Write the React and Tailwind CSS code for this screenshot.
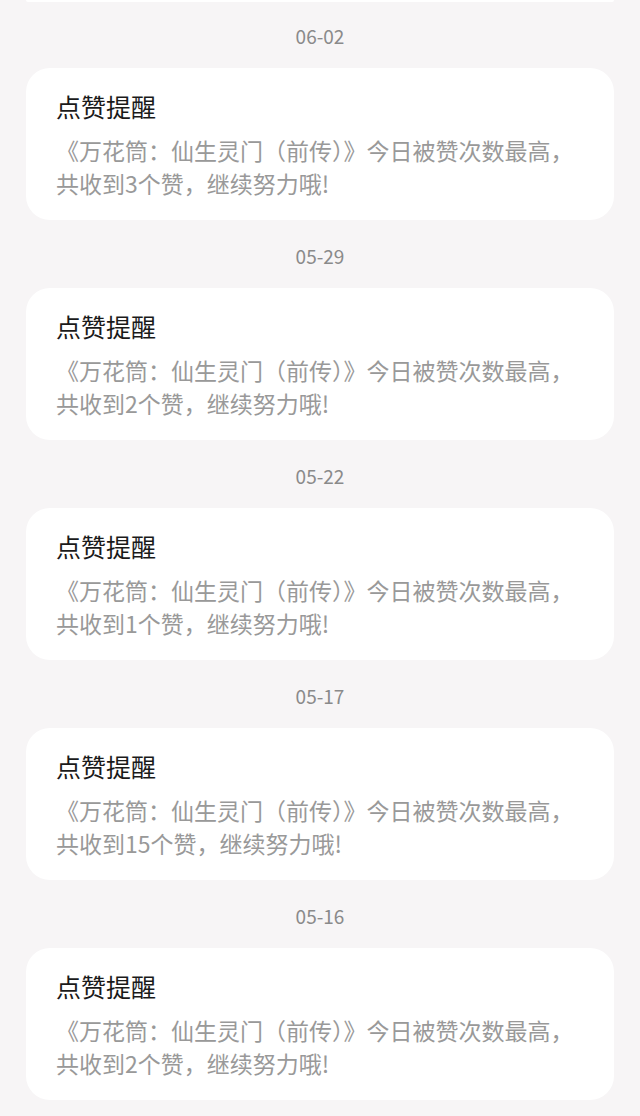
const items = [
  { date: '06-02', count: 3 },
  { date: '05-29', count: 2 },
  { date: '05-22', count: 1 },
  { date: '05-17', count: 15 },
  { date: '05-16', count: 2 },
]

function LikeCard({ count }) {
  return (
    <div className="mx-[26px] rounded-[24px] bg-white px-[30px] pt-[22px] pb-[20px]">
      <h3 className="text-[25px] leading-[32px] text-[#1a1a1a]">点赞提醒</h3>
      <p className="mt-[12px] text-[23px] leading-[33px] text-[#999999] whitespace-nowrap">
        <span className="block">《万花筒：仙生灵门（前传）》今日被赞次数最高，</span>
        <span className="block">共收到{count}个赞，继续努力哦!</span>
      </p>
    </div>
  )
}

export default function App() {
  return (
    <div
      className="h-[1116px] overflow-hidden bg-[#f7f5f6]"
      style={{ fontFamily: '"Noto Sans CJK SC", "Noto Sans", sans-serif' }}
    >
      {/* bottom edge of the previous card, scrolled out of view */}
      <div className="mx-[26px] h-[2px] rounded-b-[2px] bg-white" />

      <div className="-mt-[2px]">
        {items.map((item) => (
          <div key={item.date}>
            <div className="flex h-[68px] items-center justify-center pt-[4px] text-[19px] text-[#8a8a8a]">
              {item.date}
            </div>
            <LikeCard count={item.count} />
          </div>
        ))}
      </div>
    </div>
  )
}
